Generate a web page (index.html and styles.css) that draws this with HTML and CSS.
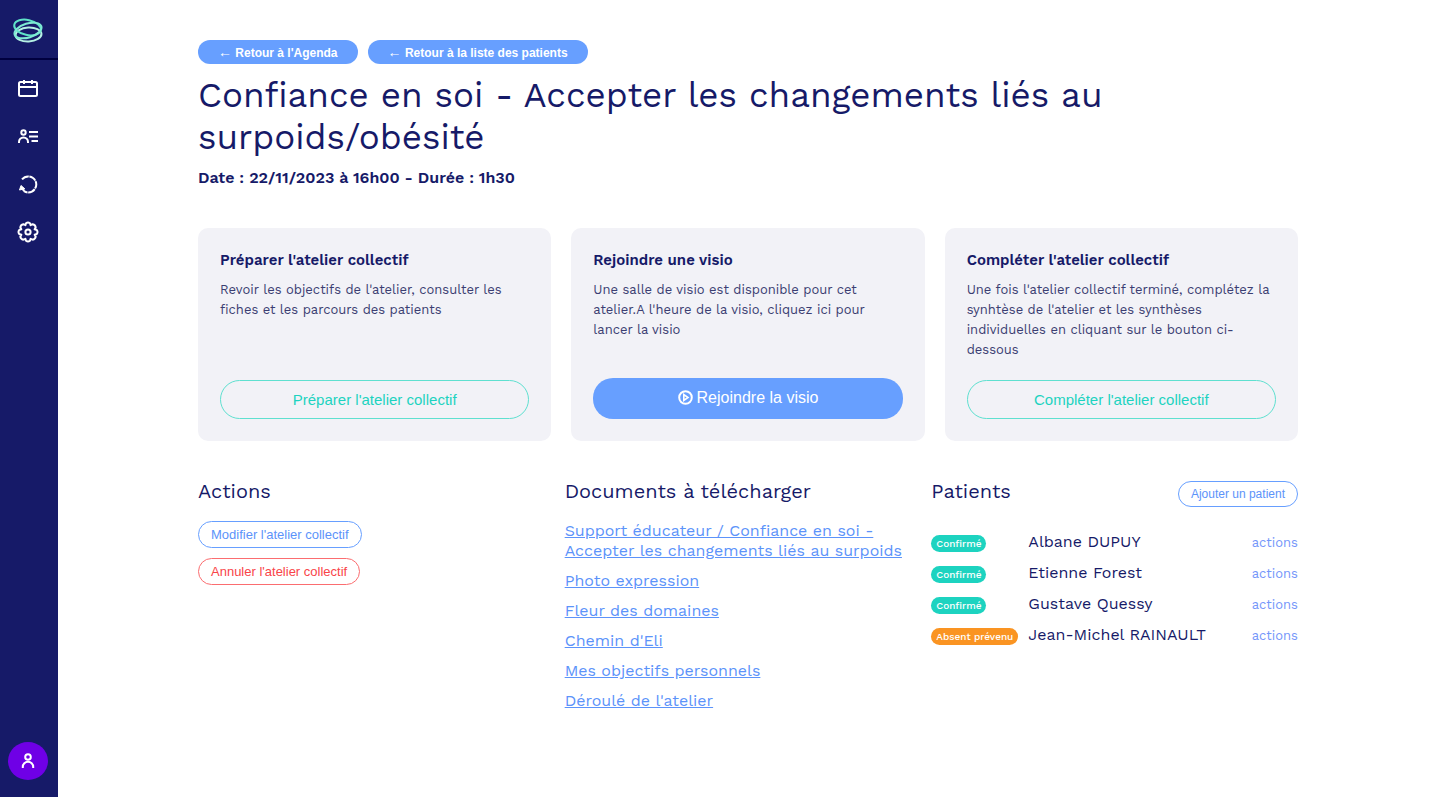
FILE: index.html
```html
<!DOCTYPE html>
<html lang="fr">
<head>
<meta charset="utf-8">
<title>Atelier collectif</title>
<link rel="stylesheet" href="styles.css">
</head>
<body>
<div class="app">
  <aside class="sidebar">
    <a class="logo" href="#" aria-label="Accueil">
      <svg width="32" height="28" viewBox="0 0 32 28" fill="none" stroke-width="2">
        <ellipse cx="16.500" cy="19.500" rx="13" ry="7" transform="rotate(-3 16.500 19.500)" stroke="#b5f1e4"/>
        <ellipse cx="15.500" cy="12.500" rx="13.500" ry="7.500" transform="rotate(12 15.500 12.500)" stroke="#5fe3c8"/>
        <ellipse cx="16" cy="15.500" rx="14" ry="7" transform="rotate(-17 16 15.500)" stroke="#7eead3"/>
      </svg>
    </a>
    <nav class="nav">
      <a href="#" aria-label="Agenda">
        <svg width="20" height="20" viewBox="0 0 20 20" fill="none" stroke="#fff" stroke-width="2">
          <rect x="1" y="4" width="18" height="14" rx="1.500"/><path d="M1 9h18M6 2v4M14 2v4"/>
        </svg>
      </a>
      <a href="#" aria-label="Patients">
        <svg width="20" height="20" viewBox="0 0 20 20" fill="none" stroke="#fff" stroke-width="2">
          <circle cx="5.500" cy="6.500" r="2.200"/><path d="M1 17v-1a4.500 4.500 0 0 1 9 0v1M11 6h9M11 10.500h9M13.500 15h6.500"/>
        </svg>
      </a>
      <a href="#" aria-label="Synchroniser">
        <svg width="20" height="20" viewBox="0 0 20 20" fill="none" stroke="#fff" stroke-width="2">
          <path d="M4 5.400A8 8 0 1 1 6 17.200" stroke-dasharray="7.500 .6"/><path d="M1.500 16l1.500-4.500 3.800 3.300z" fill="#fff" stroke-width="1"/><path d="M3.500 13.500l2.700 3.700"/>
        </svg>
      </a>
      <a href="#" aria-label="Paramètres">
        <svg width="22" height="22" viewBox="0 0 22 22" fill="none" stroke="#fff" stroke-width="2" stroke-linejoin="round">
          <path d="M9 2.200Q11 .8 13 2.200L13.600 4.200 15.700 3.200Q18.300 3.800 18.700 6.300L17.700 8.300 19.800 9Q21.200 11 19.800 13L17.700 13.700 18.700 15.700Q18.300 18.300 15.700 18.700L13.600 17.800 13 19.800Q11 21.200 9 19.800L8.400 17.800 6.300 18.700Q3.700 18.300 3.300 15.700L4.300 13.700 2.200 13Q.8 11 2.200 9L4.300 8.300 3.300 6.300Q3.700 3.700 6.300 3.200L8.400 4.200Z"/><circle cx="11" cy="11" r="2.600"/>
        </svg>
      </a>
    </nav>
    <button class="avatar" type="button" aria-label="Mon compte">
      <svg width="16" height="18" viewBox="0 0 16 18" fill="none" stroke="#fff" stroke-width="2">
        <circle cx="8" cy="5" r="2.800"/><path d="M2.800 16v-1a5.200 5.200 0 0 1 10.400 0v1"/>
      </svg>
    </button>
  </aside>

  <main class="main">
    <div class="back">
      <button class="pill" type="button"><span class="arrow">←</span> Retour à l'Agenda</button>
      <button class="pill" type="button"><span class="arrow">←</span> Retour à la liste des patients</button>
    </div>
    <h1 class="title">Confiance en soi - Accepter les changements liés au surpoids/obésité</h1>
    <p class="date">Date : 22/11/2023 à 16h00 - Durée : 1h30</p>

    <section class="cards">
      <article class="card">
        <h2 class="card-title">Préparer l'atelier collectif</h2>
        <p class="card-text">Revoir les objectifs de l'atelier, consulter les fiches et les parcours des patients</p>
        <button class="wide" type="button">Préparer l'atelier collectif</button>
      </article>
      <article class="card">
        <h2 class="card-title">Rejoindre une visio</h2>
        <p class="card-text">Une salle de visio est disponible pour cet atelier.A l'heure de la visio, cliquez ici pour lancer la visio</p>
        <button class="wide wide-blue" type="button">
          <svg width="15" height="15" viewBox="0 0 15 15" fill="none" stroke="#fff" stroke-width="2"><circle cx="7.500" cy="7.500" r="6.300"/><path d="M5.800 4.600v5.800l4.200-2.900z" stroke-width="1.600"/></svg>
          Rejoindre la visio
        </button>
      </article>
      <article class="card">
        <h2 class="card-title">Compléter l'atelier collectif</h2>
        <p class="card-text">Une fois l'atelier collectif terminé, complétez la synhtèse de l'atelier et les synthèses individuelles en cliquant sur le bouton ci-dessous</p>
        <button class="wide" type="button">Compléter l'atelier collectif</button>
      </article>
    </section>

    <div class="columns">
      <section>
        <h2 class="heading">Actions</h2>
        <div class="actions">
          <button class="outline" type="button">Modifier l'atelier collectif</button>
          <button class="outline outline-red" type="button">Annuler l'atelier collectif</button>
        </div>
      </section>
      <section>
        <h2 class="heading">Documents à télécharger</h2>
        <ul class="docs">
          <li><a href="#">Support éducateur / Confiance en soi - Accepter les changements liés au surpoids</a></li>
          <li><a href="#">Photo expression</a></li>
          <li><a href="#">Fleur des domaines</a></li>
          <li><a href="#">Chemin d'Eli</a></li>
          <li><a href="#">Mes objectifs personnels</a></li>
          <li><a href="#">Déroulé de l'atelier</a></li>
        </ul>
      </section>
      <section>
        <div class="patients-head">
          <h2 class="heading">Patients</h2>
          <button class="outline outline-small" type="button">Ajouter un patient</button>
        </div>
        <table class="patients">
          <tbody>
            <tr><td class="status"><span class="badge">Confirmé</span></td><td class="name">Albane DUPUY</td><td class="more"><a href="#">actions</a></td></tr>
            <tr><td class="status"><span class="badge">Confirmé</span></td><td class="name">Etienne Forest</td><td class="more"><a href="#">actions</a></td></tr>
            <tr><td class="status"><span class="badge">Confirmé</span></td><td class="name">Gustave Quessy</td><td class="more"><a href="#">actions</a></td></tr>
            <tr><td class="status"><span class="badge badge-orange">Absent prévenu</span></td><td class="name">Jean-Michel RAINAULT</td><td class="more"><a href="#">actions</a></td></tr>
          </tbody>
        </table>
      </section>
    </div>
  </main>
</div>
</body>
</html>
```
FILE: styles.css
```css
* { box-sizing: border-box; }
body {
  margin: 0;
  background: #fff;
  color: #161a68;
  font-family: "Work Sans", Inter, sans-serif;
  font-size: 16px;
  font-weight: 400;
}
h1, h2, p, ul { margin: 0; padding: 0; }
button {
  border: 0;
  cursor: pointer;
  font-family: "Liberation Sans", Arial, sans-serif;
}
svg { display: block; }

.app { display: flex; min-height: 100vh; }
.sidebar {
  display: flex;
  flex: 0 0 58px;
  flex-direction: column;
  background: #161a68;
}
.logo {
  display: flex;
  height: 60px;
  align-items: center;
  padding-left: 12px;
  border-bottom: 2px solid #00003f;
}
.nav {
  display: flex;
  flex-direction: column;
  padding: 4px 2px 0 0;
}
.nav a {
  display: flex;
  height: 48px;
  align-items: center;
  justify-content: center;
}
.avatar {
  display: flex;
  width: 40px;
  height: 38px;
  align-items: center;
  justify-content: center;
  margin: auto 0 17px 8px;
  padding: 0;
  border-radius: 50%;
  background: #6f00e6;
}

.main { flex: 1; min-width: 0; padding: 40px 138px 40px 140px; }
.back { display: flex; gap: 10px; }
.pill {
  height: 24px;
  padding: 0 20px;
  border-radius: 12px;
  background: #679fff;
  color: #fff;
  font-size: 12px;
  font-weight: 700;
  line-height: 16px;
}
.arrow { font-size: 14px; font-weight: 400; }
.title {
  margin-top: 10px;
  font-size: 35px;
  font-weight: 400;
  line-height: 42px;
}
.date {
  margin-top: 10px;
  font-size: 16px;
  font-weight: 600;
  line-height: 20px;
}

.cards {
  display: grid;
  grid-template-columns: repeat(3, 1fr);
  gap: 20px;
  margin-top: 40px;
}
.card {
  display: flex;
  flex-direction: column;
  padding: 22px;
  border-radius: 10px;
  background: #f2f2f7;
}
.card-title { font-size: 15px; font-weight: 600; line-height: 20px; }
.card-text {
  margin: 10px 0 20px;
  color: #3b3e72;
  font-size: 13px;
  font-weight: 400;
  line-height: 20px;
}
.wide {
  height: 39px;
  margin-top: auto;
  border: 1px solid #5fe0d0;
  border-radius: 20px;
  background: transparent;
  color: #1dd3c0;
  font-size: 15px;
}
.wide-blue {
  display: flex;
  height: 41px;
  align-items: center;
  justify-content: center;
  gap: 4px;
  padding-bottom: 3px;
  border: 0;
  background: #679fff;
  color: #fff;
  font-size: 16px;
}

.columns {
  display: grid;
  grid-template-columns: repeat(3, 1fr);
  margin-top: 40px;
}
.heading { font-size: 20px; font-weight: 400; line-height: 20px; }
.actions {
  display: flex;
  flex-direction: column;
  align-items: flex-start;
  gap: 10px;
  margin-top: 20px;
}
.outline {
  height: 27px;
  padding: 0 12px;
  border: 1px solid #679fff;
  border-radius: 14px;
  background: #fff;
  color: #5c93fa;
  font-size: 13px;
}
.outline-red { border-color: #fb6d70; color: #f94449; }
.outline-small { height: 26px; font-size: 12px; }
.docs {
  display: flex;
  flex-direction: column;
  gap: 10px;
  margin-top: 20px;
  padding-right: 20px;
  list-style: none;
  line-height: 20px;
}
.docs a { color: #5c93fa; }
.patients-head { display: flex; justify-content: space-between; }
.patients {
  width: 100%;
  margin-top: 20px;
  border-spacing: 0;
}
.patients td { height: 31px; padding: 0 0 2px; white-space: nowrap; }
.patients .status { width: 97px; padding: 2px 0 0; }
.badge {
  display: block;
  width: max-content;
  padding: 0 5px;
  border-radius: 9px;
  background: #1dd3c0;
  color: #fff;
  font-size: 10px;
  font-weight: 500;
  line-height: 17px;
}
.badge-orange { background: #fa9422; }
.patients .more { text-align: right; }
.more a { color: #7496fa; font-size: 13px; text-decoration: none; }
```
